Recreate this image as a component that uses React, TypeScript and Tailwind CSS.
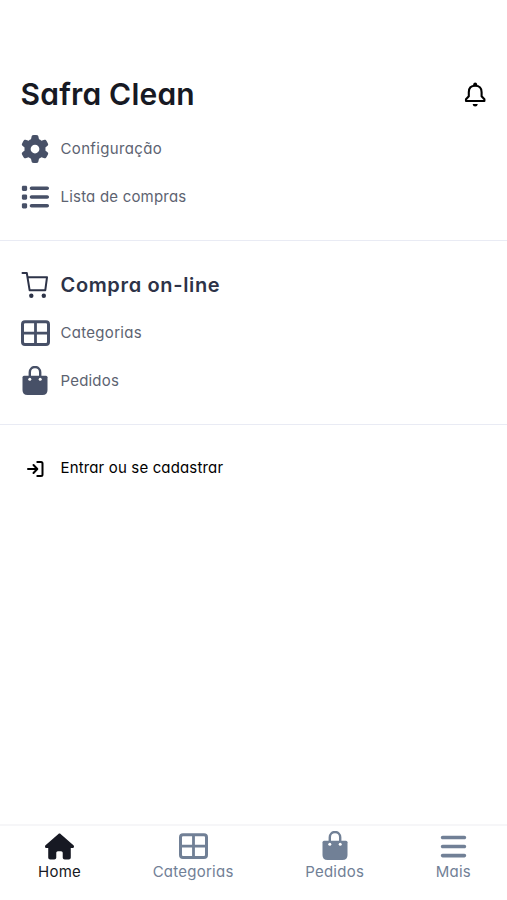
import type { ReactNode } from "react";
import { FaBars, FaGear, FaHouse, FaList } from "react-icons/fa6";

function BellIcon() {
  return (
    <svg width="25" height="27" viewBox="0 0 25 27" fill="none">
      <path
        d="M3 20V18.3L5.8 15.3V11.2Q5.8 4.7 12.2 4.7T18.6 11.2V15.3L21.4 18.3V20Z"
        stroke="currentColor"
        strokeWidth="2.1"
        strokeLinejoin="round"
      />
      <circle cx="12.2" cy="3.3" r="1.9" fill="currentColor" />
      <path d="M9.6 23.1H14.8Q14.4 25.6 12.2 25.6T9.6 23.1Z" fill="currentColor" />
    </svg>
  );
}

function TableIcon() {
  return (
    <svg width="29" height="26" viewBox="0 0 29 26" fill="none">
      <rect x="1.5" y="1.7" width="26" height="22.8" rx="2.5" stroke="currentColor" strokeWidth="3" />
      <path d="M14.5 2V24M2 13.1H27" stroke="currentColor" strokeWidth="2.8" />
    </svg>
  );
}

function BagIcon() {
  return (
    <svg width="28" height="30" viewBox="0 0 28 30" fill="none">
      <path
        d="M3 9.8H25Q26.5 9.8 26.5 11.3V24Q26.5 29 21.5 29H6.5Q1.5 29 1.5 24V11.3Q1.5 9.8 3 9.8Z"
        fill="currentColor"
      />
      <path
        d="M8.8 12V6.2a5.2 5.2 0 0 1 10.4 0V12"
        stroke="currentColor"
        strokeWidth="2.4"
      />
      <circle cx="8.8" cy="13.2" r="1.5" fill="white" />
      <circle cx="19.2" cy="13.2" r="1.5" fill="white" />
    </svg>
  );
}

function CartIcon() {
  return (
    <svg
      className="text-[#2d3348]"
      width="28"
      height="28"
      viewBox="0 0 28 28"
      fill="none"
    >
      <path
        d="M1.5 2H5.8L8.6 19.2H24.3L26 6.3H6.5"
        stroke="currentColor"
        strokeWidth="2"
        strokeLinecap="round"
        strokeLinejoin="round"
      />
      <circle cx="10.3" cy="24.7" r="2.2" fill="currentColor" />
      <circle cx="22.8" cy="24.7" r="2.2" fill="currentColor" />
    </svg>
  );
}

function LoginIcon() {
  return (
    <svg className="ml-[5px]" width="18" height="18" viewBox="0 0 18 18" fill="none">
      <path
        d="M2 9H11M7.5 5L11.3 9L7.5 13M11.3 2H15Q16.5 2 16.5 3.5V14.5Q16.5 16 15 16H11.3"
        stroke="currentColor"
        strokeWidth="2"
        strokeLinecap="round"
        strokeLinejoin="round"
      />
    </svg>
  );
}

type ItemProps = { icon: ReactNode; label: string; className?: string };

function MenuItem({
  icon,
  label,
  className = "text-[15px] tracking-[0.2px] text-[#5d6371]",
}: ItemProps) {
  return (
    <div className="flex h-12 items-center text-[#475067]">
      <span className="flex w-10 shrink-0">{icon}</span>
      <span className={className}>{label}</span>
    </div>
  );
}

function NavItem({ icon, label, className = "text-[#718096]" }: ItemProps) {
  return (
    <a className={`flex flex-col items-center ${className}`}>
      <span className="flex h-[30px] items-center">{icon}</span>
      <span className="text-[15px] leading-[22px] tracking-[0.25px]">{label}</span>
    </a>
  );
}

export default function App() {
  return (
    <div className="flex h-[900px] w-[507px] flex-col bg-white font-['Inter',sans-serif] [font-feature-settings:'cv11']">
      <header className="mt-[70px] flex h-12 items-center justify-between pr-[19px] pl-[20.5px]">
        <h1 className="text-[30px] font-semibold tracking-[0.2px] text-[#171923]">
          Safra Clean
        </h1>
        <BellIcon />
      </header>
      <section className="border-b border-[#e9ebf4] pt-[7px] pb-[19px] pl-[20.5px]">
        <MenuItem
          icon={<FaGear size={28} />}
          label="Configuração"
          className="text-[15px] tracking-[0.35px] text-[#5d6371]"
        />
        <MenuItem icon={<FaList size={28} />} label="Lista de compras" />
      </section>
      <section className="border-b border-[#e9ebf4] pt-5 pb-[19px] pl-[20.5px]">
        <MenuItem
          icon={<CartIcon />}
          label="Compra on-line"
          className="text-[20px] font-semibold tracking-[0.65px] text-[#2d3348]"
        />
        <MenuItem
          icon={<TableIcon />}
          label="Categorias"
          className="text-[15px] tracking-[0.3px] text-[#5d6371]"
        />
        <MenuItem icon={<BagIcon />} label="Pedidos" />
      </section>
      <section className="pt-5 pl-[20.5px] text-black">
        <div className="flex h-[47px] items-center">
          <span className="flex w-10 shrink-0">
            <LoginIcon />
          </span>
          <span className="text-[15px] tracking-[0.15px]">Entrar ou se cadastrar</span>
        </div>
      </section>
      <nav className="mt-auto flex h-[76px] justify-between border-t-2 border-[#f6f6f8] pt-[5px] pr-9 pl-[38px]">
        <NavItem icon={<FaHouse size={29} />} label="Home" className="text-[#171923]" />
        <NavItem icon={<TableIcon />} label="Categorias" />
        <NavItem icon={<BagIcon />} label="Pedidos" />
        <NavItem icon={<FaBars size={29} />} label="Mais" />
      </nav>
    </div>
  );
}
